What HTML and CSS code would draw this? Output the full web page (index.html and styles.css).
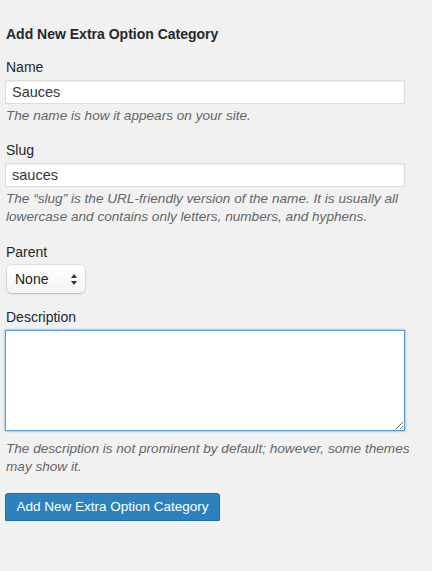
FILE: index.html
```html
<!DOCTYPE html>
<html lang="en">
<head>
<meta charset="utf-8">
<title>Add New Extra Option Category</title>
<link rel="stylesheet" href="styles.css">
</head>
<body>
<div class="form-wrap">
  <h2 class="title">Add New Extra Option Category</h2>
  <form class="term-form">
    <div class="field field-name">
      <label class="label" for="tag-name">Name</label>
      <input class="text-input" id="tag-name" type="text" value="Sauces">
      <p class="help">The name is how it appears on your site.</p>
    </div>
    <div class="field">
      <label class="label" for="tag-slug">Slug</label>
      <input class="text-input" id="tag-slug" type="text" value="sauces">
      <p class="help">The “slug” is the URL-friendly version of the name. It is usually all lowercase and contains only letters, numbers, and hyphens.</p>
    </div>
    <div class="field field-parent">
      <label class="label" for="parent">Parent</label>
      <div class="select-box">
        <span class="select-value">None</span>
        <svg class="select-arrows" width="6" height="11" viewBox="0 0 6 11" aria-hidden="true">
          <path d="M3 0 L6 4 L0 4 Z" fill="#333"/>
          <path d="M0 7 L6 7 L3 11 Z" fill="#333"/>
        </svg>
      </div>
    </div>
    <div class="field">
      <label class="label" for="tag-description">Description</label>
      <textarea class="textarea focused" id="tag-description" rows="5"></textarea>
      <p class="help help-after-area">The description is not prominent by default; however, some themes may show it.</p>
    </div>
    <div class="submit">
      <button type="button" class="button-primary">Add New Extra Option Category</button>
    </div>
  </form>
</div>
</body>
</html>
```

FILE: styles.css
```css
html, body {
  margin: 0;
  padding: 0;
  background: #f1f1f1;
}

body {
  font-family: "Liberation Sans", Arial, sans-serif;
  font-size: 14px;
  line-height: 18px;
  color: #23282d;
}

.form-wrap {
  width: 420px;
  padding: 25px 0 0 5px;
}

.title {
  margin: 0 0 15px 1px;
  font-size: 14px;
  line-height: 18px;
  font-weight: bold;
  color: #23282d;
}

.term-form {
  display: flex;
  flex-direction: column;
}

.field {
  display: flex;
  flex-direction: column;
  align-items: flex-start;
  margin-bottom: 17px;
}

.field-name {
  margin-bottom: 16px;
}

.label {
  display: block;
  margin-left: 1px;
  margin-bottom: 4px;
  color: #23282d;
}

.text-input {
  box-sizing: border-box;
  width: 400px;
  height: 24px;
  margin: 0;
  padding: 2px 6px;
  border: 1px solid #dddddd;
  background: #ffffff;
  box-shadow: inset 0 1px 2px rgba(0, 0, 0, 0.07);
  font-family: inherit;
  font-size: 14.5px;
  color: #32373c;
  outline: none;
}

.help {
  margin: 3px 0 0 1px;
  font-style: italic;
  font-size: 13.6px;
  color: #666666;
}

.field-parent {
  margin-bottom: 15px;
}

.select-box {
  box-sizing: border-box;
  width: 78px;
  height: 28px;
  margin-left: 2px;
  display: flex;
  align-items: center;
  justify-content: space-between;
  padding: 0 8px 0 8px;
  border-radius: 5px;
  background: linear-gradient(#ffffff, #f4f4f4);
  box-shadow: 0 0 0 1px rgba(0, 0, 0, 0.06), 0 1px 2px rgba(0, 0, 0, 0.18);
  color: #222;
}

.select-value {
  font-size: 14px;
}

.select-arrows {
  display: block;
}

.textarea {
  box-sizing: border-box;
  display: block;
  width: 400px;
  height: 101px;
  margin: 0;
  padding: 2px 6px;
  border: 1px solid #dddddd;
  background: #ffffff;
  font-family: inherit;
  font-size: 14px;
  color: #32373c;
  outline: none;
}

.textarea.focused {
  border-color: #5b9dd9;
  box-shadow: 0 0 2px rgba(30, 140, 190, 0.8);
}

.help-after-area {
  margin-top: 9px;
}

.submit {
  display: flex;
}

.button-primary {
  box-sizing: border-box;
  width: 215px;
  height: 28px;
  padding: 0;
  border: 1px solid #1f6fa5;
  border-radius: 3px;
  background: #2b82bd;
  box-shadow: 0 1px 0 #1f6fa5;
  color: #ffffff;
  font-family: inherit;
  font-size: 13.5px;
  line-height: 26px;
  text-align: center;
  cursor: pointer;
}
```
